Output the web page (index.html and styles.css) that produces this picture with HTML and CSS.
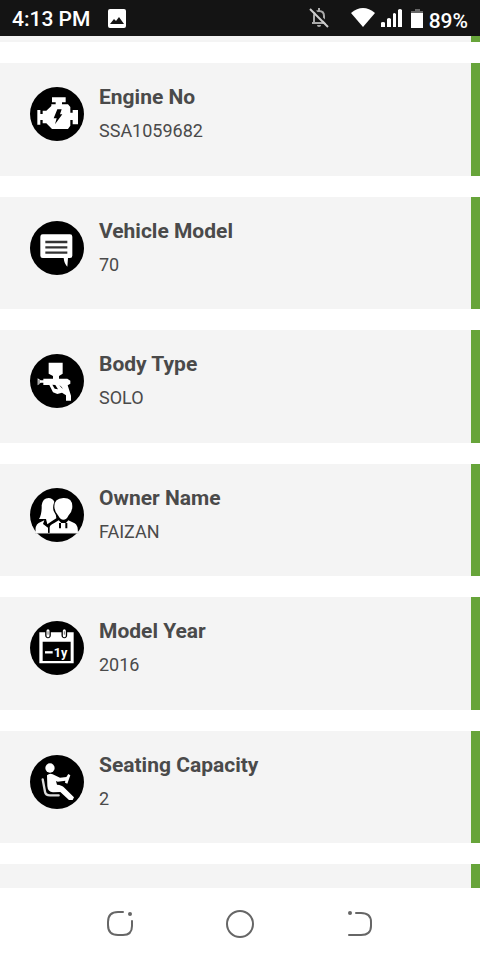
FILE: index.html
```html
<!DOCTYPE html>
<html lang="en">
<head>
    <meta charset="UTF-8">
    <meta name="viewport" content="width=device-width, initial-scale=1.0">
    <title>Vehicle Details</title>
    <link rel="stylesheet" href="styles.css">
</head>
<body>
    <header class="status-bar">
        <span class="clock">4:13 PM</span>
        <svg class="photo-icon" width="18" height="19" viewBox="0 0 18 19">
            <path fill="#fff" fill-rule="evenodd" d="M2 0H16Q18 0 18 2V17Q18 19 16 19H2Q0 19 0 17V2Q0 0 2 0ZM2 15H16L11 8L8 12L6 10Z"/>
        </svg>
        <div class="status-icons">
            <svg class="bell-icon" width="20" height="20" viewBox="0 0 20 20">
                <path fill="none" stroke="#aaa" stroke-width="2" d="M3 15H17M5 15V8Q5 3 10 3Q15 3 15 8V15M10 0V3"/>
                <path fill="#aaa" d="M8 17H12Q12 19 10 19Q8 19 8 17Z"/>
                <path stroke="#141414" stroke-width="2" d="M3 0L20 17"/>
                <path stroke="#ccc" stroke-width="2" d="M1 1L19 19"/>
            </svg>
            <svg class="wifi-icon" width="24" height="20" viewBox="0 0 24 20">
                <path fill="#fff" d="M0 5Q12 -5 24 5L12 19Z"/>
            </svg>
            <svg class="signal-icon" width="21" height="18" viewBox="0 0 21 18">
                <path fill="#fff" d="M0 14Q0 13 2 13Q4 13 4 14V18H0ZM6 10Q8 8 10 10V18H6ZM12 5Q13 3 15 5V18H12ZM17 1Q19 -1 21 1V18H17Z"/>
            </svg>
            <svg class="battery-icon" width="12" height="20" viewBox="0 0 12 20">
                <path fill="#666" d="M4 0H9V2H12V5H0V2H4Z"/>
                <path fill="#fff" d="M0 4H12V19H0Z"/>
            </svg>
            <span class="battery-text">89%</span>
        </div>
    </header>

    <main class="details">
        <div class="card card-prev"></div>

        <section class="card">
            <svg class="icon" viewBox="30 21 162 162">
                <circle cx="111" cy="102" r="81"/>
                <path fill="#fff" d="M96 52H137V67H126V73H144L151 81V98H158V90H174V133H158V120H151V137L144 147H96L79 130H68V120H61V134H52V90H61V102H68V92H79L94 78V73H107V67H96Z"/>
                <path d="M112 88H125L120 103H127L105 133L110 115H101Z"/>
            </svg>
            <div class="info">
                <h2>Engine No</h2>
                <p>SSA1059682</p>
            </div>
        </section>

        <section class="card">
            <svg class="icon" viewBox="30 18 162 162">
                <circle cx="111" cy="99" r="81"/>
                <path fill="#fff" d="M68 58H150Q157 58 157 65V122Q157 129 150 129H144L142 155Q133 147 131 129H68Q61 129 61 122V65Q61 58 68 58Z"/>
                <path stroke="#333" stroke-width="7" d="M76 81H142M76 97H142M76 113H142"/>
            </svg>
            <div class="info">
                <h2>Vehicle Model</h2>
                <p>70</p>
            </div>
        </section>

        <section class="card">
            <svg class="icon" viewBox="30 18 162 162">
                <circle cx="111" cy="99" r="81"/>
                <path fill="#fff" d="M86 44H128V77L117 84V92H142L151 98V107L143 112L153 143V158H138V142L126 134L112 138L99 133L88 111H70V104H62L53 112V91L62 97H70V92H99V84L86 77Z"/>
                <path d="M97 110L104 122L114 124L106 111Z"/>
                <path stroke="#555" stroke-width="3" d="M57 95V109M120 113L127 121"/>
            </svg>
            <div class="info">
                <h2>Body Type</h2>
                <p>SOLO</p>
            </div>
        </section>

        <section class="card">
            <svg class="icon" viewBox="30 18 162 162">
                <circle cx="111" cy="99" r="81"/>
                <path fill="#fff" d="M65 70Q68 48 86 48Q97 48 103 59Q97 75 101 87Q109 98 109 109L95 118L82 127L78 111H57Q66 97 65 70Z"/>
                <path fill="#fff" d="M130 48Q157 47 157 73Q157 90 145 101Q140 113 130 113Q121 113 115 101Q103 88 103 73Q103 49 130 48Z"/>
                <path fill="#fff" d="M47 153Q44 130 56 123L73 115L69 126L84 137V153ZM89 153V136Q90 128 103 123L116 115L124 123H138L145 115L164 124Q174 129 174 153Z"/>
                <path stroke="#000" stroke-width="6" d="M120 123V139M139 123V139"/>
                <path stroke="#ccc" stroke-width="2" d="M45 154H175"/>
            </svg>
            <div class="info">
                <h2>Owner Name</h2>
                <p>FAIZAN</p>
            </div>
        </section>

        <section class="card">
            <svg class="icon" viewBox="30 18 162 162">
                <circle cx="111" cy="99" r="81"/>
                <path fill="#fff" fill-rule="evenodd" d="M58 52H161V145H58ZM68 80V138H152V80Z"/>
                <path stroke="#000" stroke-width="17" stroke-linecap="round" d="M84 49V61M133 49V61"/>
                <path stroke="#fff" stroke-width="9" stroke-linecap="round" d="M84 47V62M133 47V62"/>
                <path stroke="#777" stroke-width="3" d="M84 49V59M133 49V59"/>
                <path stroke="#fff" stroke-width="7" d="M75 112H98"/>
                <text class="icon-text" x="101" y="126">1y</text>
            </svg>
            <div class="info">
                <h2>Model Year</h2>
                <p>2016</p>
            </div>
        </section>

        <section class="card">
            <svg class="icon" viewBox="30 18 162 162">
                <circle cx="111" cy="99" r="81"/>
                <circle fill="#fff" cx="90" cy="57" r="14"/>
                <path fill="#fff" d="M81 79Q89 71 98 76L120 86L139 84L145 75L151 79L142 104L135 101L136 95L113 98L108 96L111 107Q126 108 133 116L162 145L158 153H147L121 129L99 130Q83 128 82 111Z"/>
                <path fill="none" stroke="#ddd" stroke-width="7" stroke-linecap="round" stroke-linejoin="round" d="M68 91L75 128Q77 139 90 139H116"/>
            </svg>
            <div class="info">
                <h2>Seating Capacity</h2>
                <p>2</p>
            </div>
        </section>

        <div class="card card-next"></div>
    </main>

    <nav class="nav-bar">
        <button class="nav-btn" aria-label="Recent apps">
            <svg width="28" height="28" viewBox="0 0 28 28">
                <path d="M17 2H12Q2 2 2 12V15Q2 25 12 25H17Q26 25 26 16V11"/>
                <circle class="dot" cx="24" cy="4" r="2"/>
            </svg>
        </button>
        <button class="nav-btn" aria-label="Home">
            <svg width="28" height="28" viewBox="0 0 28 28">
                <circle cx="14" cy="14" r="13"/>
            </svg>
        </button>
        <button class="nav-btn" aria-label="Back">
            <svg width="28" height="28" viewBox="0 0 28 28">
                <path d="M10 3H15Q25 3 25 12V16Q25 25 15 25H3"/>
                <circle class="dot" cx="4" cy="3" r="2"/>
            </svg>
        </button>
    </nav>
</body>
</html>
```

FILE: styles.css
```css
* {
    box-sizing: border-box;
}

body {
    margin: 0;
    font-family: Roboto, "Liberation Sans", sans-serif;
    background: #ffffff;
    color: #4a4a4a;
    display: flex;
    flex-direction: column;
    min-height: 100vh;
}

/* Status Bar */
.status-bar {
    display: flex;
    align-items: center;
    height: 36px;
    padding: 0 12px;
    background: #141414;
    color: #ffffff;
    font-size: 21px;
    font-weight: 500;
}

.clock {
    padding-top: 2px;
}

.photo-icon {
    margin-left: 18px;
}

.status-icons {
    display: flex;
    align-items: center;
    margin-left: auto;
}

.bell-icon {
    margin-right: 22px;
}

.wifi-icon {
    margin-right: 6px;
}

.signal-icon {
    margin-right: 9px;
}

.battery-icon {
    margin-top: 2px;
    margin-right: 6px;
}

.battery-text {
    padding-top: 5px;
}

/* Detail Cards */
.details {
    flex: 1;
    display: flex;
    flex-direction: column;
    gap: 21px;
}

.card {
    flex: 1 0 auto;
    display: flex;
    align-items: flex-start;
    gap: 15px;
    padding: 20px 20px 29px 30px;
    background: #f4f4f4;
    border-right: 9px solid #67a43a;
}

/* Cards cut off by the scroll position */
.card-prev,
.card-next {
    flex: none;
    padding: 0;
}

.card-prev {
    height: 6px;
}

.card-next {
    height: 24px;
}

.icon {
    width: 54px;
    height: 54px;
    margin-top: 4px;
    flex: none;
}

.icon-text {
    fill: #ffffff;
    font-size: 38px;
    font-weight: bold;
}

.info h2,
.info p {
    margin: 0;
    line-height: 28px;
}

.info h2 {
    margin-bottom: 6px;
    font-size: 21px;
    font-weight: bold;
}

.info p {
    font-size: 18px;
}

/* Navigation Bar */
.nav-bar {
    display: flex;
    justify-content: center;
    align-items: center;
    gap: 72px;
    height: 72px;
}

.nav-btn {
    display: flex;
    justify-content: center;
    width: 48px;
    padding: 0;
    border: none;
    background: none;
    cursor: pointer;
}

.nav-btn svg {
    fill: none;
    stroke: #666666;
    stroke-width: 2;
    stroke-linecap: round;
}

.nav-btn .dot {
    fill: #666666;
    stroke: none;
}
```
